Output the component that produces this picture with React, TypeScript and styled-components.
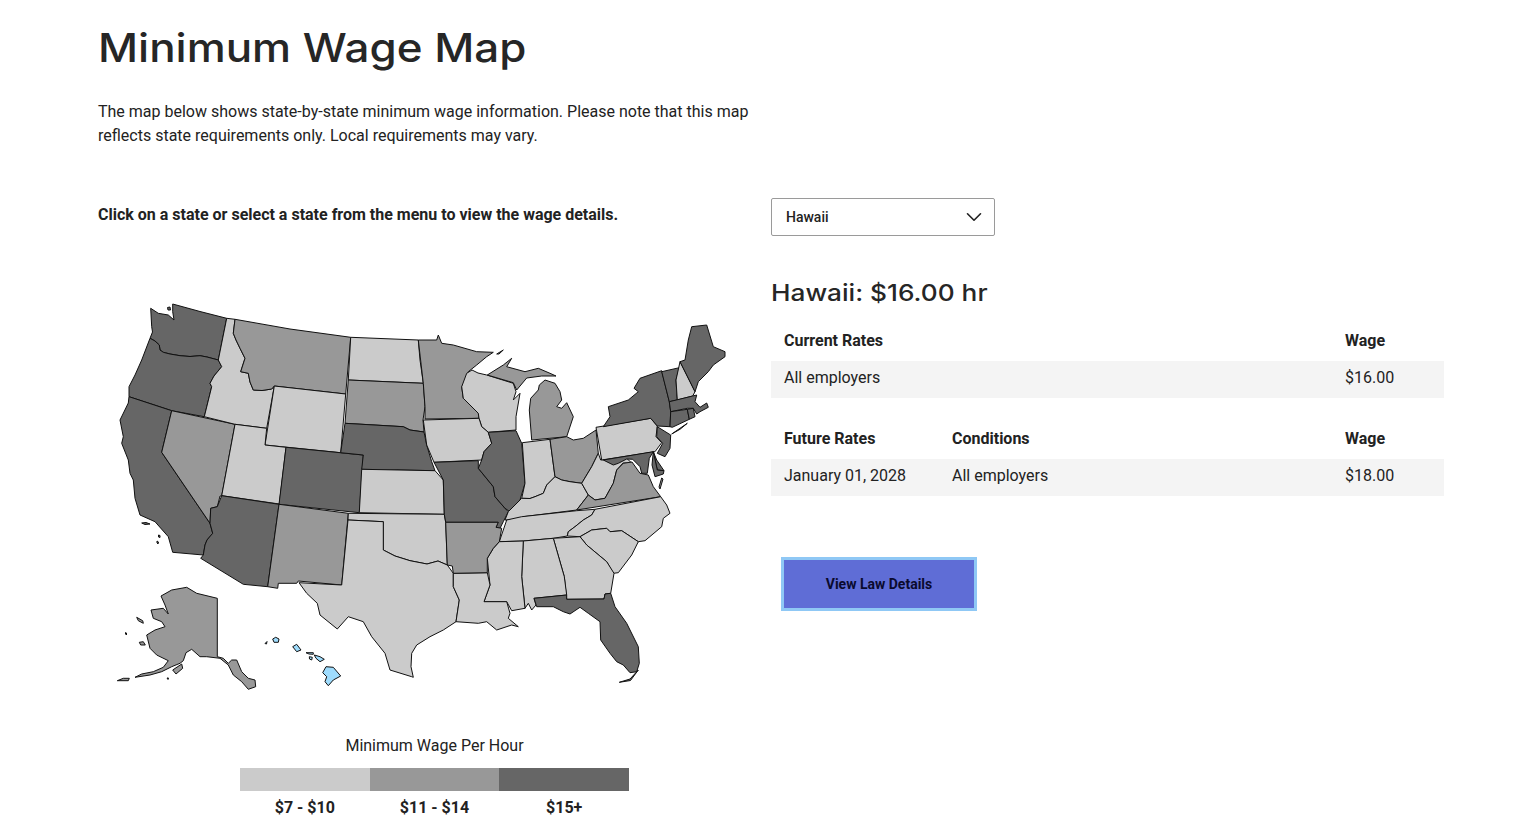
import React from 'react';
import styled, { createGlobalStyle } from 'styled-components';
import { ChevronDown } from 'lucide-react';

const GlobalStyle = createGlobalStyle`
  html, body {
    margin: 0;
    padding: 0;
    background: #fff;
    overflow: hidden;
  }
  body {
    font-family: Roboto, "Liberation Sans", sans-serif;
    color: #222;
  }
`

const Page = styled.div`
  width: 1346px;
  height: 815px;
  margin-left: 98px;
  padding-top: 22px;
  box-sizing: border-box;
`

const Title = styled.h1`
  font-family: Inter, "Liberation Sans", sans-serif;
  font-size: 40px;
  line-height: 52px;
  font-weight: 500;
  margin: 0;
  color: #262626;
  transform: scaleX(1.098);
  transform-origin: left center;
`

const Intro = styled.p`
  width: 665px;
  margin: 26px 0 0;
  font-size: 16px;
  line-height: 24px;
`

const Columns = styled.div`
  display: grid;
  grid-template-columns: 673px 673px;
  margin-top: 50px;
`

const Prompt = styled.div`
  font-size: 16px;
  font-weight: 700;
  line-height: 24px;
  margin-top: 5px;
`

const MapDrawing = styled.svg`
  display: block;
  width: 640px;
  height: 410px;
  margin-top: 63px;
`

const State = styled.polygon<{ $fill: string }>`
  fill: ${(p) => p.$fill};
  stroke: #111;
  stroke-width: 1;
  stroke-linejoin: round;
`

const Legend = styled.div`
  display: flex;
  flex-direction: column;
  align-items: center;
  margin-top: 34px;
`

const LegendTitle = styled.div`
  font-size: 16px;
  line-height: 24px;
`

const LegendBar = styled.div`
  display: grid;
  grid-template-columns: repeat(3, 1fr);
  width: 389px;
  margin-top: 10px;
`

const LegendSwatch = styled.div<{ $fill: string }>`
  height: 23px;
  background: ${(p) => p.$fill};
`

const LegendLabel = styled.div`
  font-size: 16px;
  font-weight: 700;
  line-height: 24px;
  text-align: center;
  margin-top: 5px;
`

const SelectBox = styled.div`
  width: 224px;
  height: 38px;
  box-sizing: border-box;
  display: flex;
  align-items: center;
  justify-content: space-between;
  padding: 0 7px 0 14px;
  border: 1px solid #9a9a9a;
  border-radius: 2px;
  font-size: 14px;
  font-weight: 500;
`

const WageTitle = styled.h2`
  font-family: Inter, "Liberation Sans", sans-serif;
  font-size: 23.5px;
  line-height: 32px;
  font-weight: 500;
  margin: 41px 0 0;
  color: #262626;
  transform: scaleX(1.115);
  transform-origin: left center;
`

const Table = styled.div`
  margin-top: 13px;
  & + & {
    margin-top: 22px;
  }
`

const HeadRow = styled.div`
  display: grid;
  grid-template-columns: 168px 393px 1fr;
  align-items: center;
  height: 39px;
  box-sizing: border-box;
  padding: 0 13px 2px;
  font-size: 16px;
  font-weight: 700;
`

const BodyRow = styled.div`
  display: grid;
  grid-template-columns: 168px 393px 1fr;
  align-items: center;
  height: 37px;
  box-sizing: border-box;
  padding: 0 13px 5px;
  font-size: 16px;
  background: #f4f4f4;
`

const LawButton = styled.button`
  display: block;
  width: 196px;
  height: 54px;
  margin: 61px 0 0 10px;
  border: 3px solid #8fc8f5;
  background: #5f6dd6;
  color: #0a0a2e;
  font-family: Roboto, "Liberation Sans", sans-serif;
  font-size: 14px;
  font-weight: 700;
`

const LIGHT = '#cbcbcb';
const MID = '#989898';
const DARK = '#666666';
const HAWAII = '#9fdcfd';

// traced from the reference, coordinates are page pixels
const STATES: { id: string; fill: string; points: string }[] = [
  { id: 'WA', fill: DARK, points: '172.7,304 200,311.5 226.7,318.3 218.3,360 207,357 200,355.7 190,356.5 180,355.7 170,354 163.3,352.3 160,350 159.3,345 155,341 150,338.3 152.5,332 151.7,326.7 150.7,308.3 158.3,313.3 168.3,315 174,320 172.7,311.7' },
  { id: 'WA2', fill: DARK, points: '167.5,307.5 170,307 170.5,310 168,310' },
  { id: 'OR', fill: DARK, points: '150,338.3 155,341 159.3,345 160,350 163.3,352.3 170,354 180,355.7 190,356.5 200,355.7 207,357 218.3,360 221.7,366.7 214,376 210,383.3 211.7,386.7 204.3,416.7 171.7,410.7 129,396.7 129,386.7 135,375 141.7,360' },
  { id: 'CA', fill: DARK, points: '129,396.7 171.7,410.7 161.7,452.3 210,523.3 212.7,533.3 207,540 205,545 203.3,555 172.7,552.3 168.3,536.7 155,521.7 140,515 135,498.3 133.3,480 130,473.3 128.3,460 121.7,443.3 123.3,436.7 120,420 128.3,403' },
  { id: 'CA2', fill: DARK, points: '141.7,523 146,522.5 150,524 145,524.5' },
  { id: 'CA3', fill: DARK, points: '158.5,535 160,535.5 160,537.5 158.5,537' },
  { id: 'CA4', fill: DARK, points: '157,541 158.5,542 158,544 157,543' },
  { id: 'NV', fill: MID, points: '171.7,410.7 235,424.3 221.7,496 220,496 217.3,506.7 210.7,508.3 210,523.3 161.7,452.3' },
  { id: 'ID', fill: LIGHT, points: '226.7,318.3 235,319.3 233.3,333.3 236,340 240,348.3 245,358.3 240.7,371.7 248.3,373.3 250,382 253.3,390 262,390.5 271.7,389 274.3,386 266.7,428.3 235,424.3 204.3,416.7 211.7,386.7 210,383.3 214,376 221.7,366.7 218.3,360' },
  { id: 'MT', fill: MID, points: '235,319.3 290,329 350.7,337.3 345.7,394 274.3,386 271.7,389 262,390.5 253.3,390 250,382 248.3,373.3 240.7,371.7 245,358.3 240,348.3 236,340 233.3,333.3' },
  { id: 'WY', fill: LIGHT, points: '274.3,386 345.7,394 340.7,452.7 265,445' },
  { id: 'UT', fill: LIGHT, points: '235,424.3 266.7,428.3 265,445 286,447.3 279.3,504 221.7,495.7' },
  { id: 'CO', fill: DARK, points: '286,447.3 363.3,455 359.3,512.7 279,504.3' },
  { id: 'AZ', fill: DARK, points: '221.7,495.7 279,504.3 267.7,586.7 243.3,584.3 200.7,558.3 203.3,555 205,545 207,540 212.7,533.3 210,523.3 210.7,508.3 217.3,506.7' },
  { id: 'NM', fill: MID, points: '279,504.3 348.3,513.3 341.7,585 298.3,581 296.7,583.3 278.3,583.3 277.7,588.3 267.7,586.7' },
  { id: 'ND', fill: LIGHT, points: '350.7,337.3 418.3,340 420,360 423.3,383.3 348.3,380' },
  { id: 'SD', fill: MID, points: '348.3,380 423.3,383.3 425,406.7 423,420 424,432 410,430 403.3,426.7 345,423.3' },
  { id: 'NE', fill: DARK, points: '345,423.3 403.3,426.7 410,430 424,432 426.7,445 431.7,461.7 435,470.7 361.7,469.3 363.3,455 340.7,452.7' },
  { id: 'KS', fill: LIGHT, points: '361.7,469.3 435,470.7 443.3,480 444.3,514.3 359.3,512.7' },
  { id: 'OK', fill: LIGHT, points: '348.3,513.3 444.3,514.3 445.7,522.3 447.3,565 438,561 427,564 410,560.7 395,556 383.3,550 383.3,521.7 348,520' },
  { id: 'TX', fill: LIGHT, points: '348,520 383.3,521.7 383.3,550 395,556 410,560.7 427,564 438,561 447.3,565 453.3,573.3 453.3,586.7 459.3,600 456,621.7 443.3,630 430,636.7 416.7,645 411.7,653.3 411,666.7 413.3,677.3 411.7,676.7 390,670 385,653.3 371.7,636.7 363.3,621.7 348.3,616.7 337.3,629 320,615 317.3,603.3 306.7,593.3 299,582.7 341.7,585' },
  { id: 'MN', fill: MID, points: '418.3,340 436.7,340 438.3,335 441.7,343.3 453.3,345 476.7,351.7 493.3,352.3 486.7,356.7 476.7,365 468.3,371.7 466.7,380 461.7,386.7 463.3,398.3 478.3,413.3 479,418.3 425,419 425,406.7 423.3,383.3' },
  { id: 'MN2', fill: MID, points: '496.7,354 503.3,350 499,354' },
  { id: 'WI', fill: LIGHT, points: '466.7,373.3 472,370 478,373 486.7,375 513.3,383.3 516,391.7 513.3,400 520,393.3 516,416.7 516,430 488.3,432.3 481.7,426.7 479,418.3 478.3,413.3 463.3,398.3 461.7,386.7' },
  { id: 'IA', fill: LIGHT, points: '423.3,420 479,418.3 481.7,426.7 488.3,432.3 491.7,443.3 484,451.7 481.7,460 434,462.3 426.7,445' },
  { id: 'MO', fill: DARK, points: '434,462.3 478.3,460.7 478.3,468.3 493.3,486.7 495,496.7 505,508.3 508.3,511.7 503.3,521.7 500,528.3 496,527.3 498,522.3 445.7,522.3 444.3,514.3 443.3,480' },
  { id: 'IL', fill: DARK, points: '488.3,432.3 516,430.7 521.7,443.3 525,483.3 520,500 510,511.7 505,508.3 495,496.7 493.3,486.7 478.3,468.3 481.7,460 484,451.7 491.7,443.3' },
  { id: 'IN', fill: LIGHT, points: '522.3,442.7 550,439.3 555,476.7 546.7,485 543.3,493.3 535,496.7 530,498.5 521.7,498.3 525,483.3' },
  { id: 'MI', fill: MID, points: '531.7,440 529.3,410 530.7,398.3 538.3,390 539.3,385 545,380 555,383.3 560,391.7 561.7,400 556.7,406.7 561.7,408.3 566.7,402.7 573.3,416.7 566.7,436.7' },
  { id: 'MIU', fill: MID, points: '487.3,375 503.3,365 511.7,358.3 506.7,366.7 525,371.7 538.3,368.3 550,373.3 556,376 541.7,376 526.7,378 516.7,390 513.3,382.7' },
  { id: 'OH', fill: MID, points: '550,439.3 566.7,436.7 573.3,440 583.3,438.3 596,430 598.3,453.3 591.7,466.7 581.7,483.3 570,481.7 561.7,480 555,476.7' },
  { id: 'KY', fill: LIGHT, points: '521.7,498.3 530,498.5 535,496.7 543.3,493.3 546.7,485 555,476.7 561.7,480 570,481.7 581.7,483.3 588.3,495 576.7,510 523.3,516.7 521.7,519 505,520 508.3,511.7 520,500' },
  { id: 'WV', fill: LIGHT, points: '581.7,483.3 591.7,466.7 598.3,453.3 600.7,460 611.7,458.3 613.3,464 626.7,458.3 631.7,463 623,463 616.7,470 613.3,483.3 605,498.3 595,500 588.3,495' },
  { id: 'VA', fill: MID, points: '576.7,510 588.3,495 595,500 605,498.3 613.3,483.3 616.7,470 623.3,463.3 632,462 640,473.3 648.3,475 653.3,486.7 660.7,496.7' },
  { id: 'VA2', fill: MID, points: '661.7,478 663,479 660,489 659,487' },
  { id: 'TN', fill: LIGHT, points: '506.7,520 521.7,516.7 576.7,510.7 595,509.3 591.7,515 583.3,520 575,526.7 568.3,531.7 567.3,536 553.3,538.3 523.3,541 499.3,541.7 505,525' },
  { id: 'NC', fill: LIGHT, points: '595,509.3 660.7,496.7 666.7,505 670,513.3 663.3,518.3 661.7,526.7 645,540.7 638.3,541.7 621.7,530.7 610,531.7 606.7,528.3 591.7,530 580,536.7 567.3,536 568.3,531.7 575,526.7 583.3,520 591.7,515' },
  { id: 'SC', fill: LIGHT, points: '580,536.7 591.7,530 606.7,528.3 610,531.7 621.7,530.7 638.3,541.7 631.7,555 618.3,572.7 613.3,573.3 606.7,561.7 586.7,545' },
  { id: 'GA', fill: LIGHT, points: '553.3,538.3 580,536.7 586.7,545 606.7,561.7 614,573.3 610.7,593.3 605,594 604,599 566.7,599.3 564.3,576.7' },
  { id: 'AL', fill: LIGHT, points: '523.3,541 553.3,538.3 564.3,576.7 566.7,595 534,598.3 536,605 531.7,610 528.3,603.3 525,608.3 521.7,576.7' },
  { id: 'MS', fill: LIGHT, points: '499.3,541.7 523.3,541 521.7,576.7 525,608.3 511.7,610.7 506.7,601.7 484,601.7 490,585 487.3,558.3 493.3,548.3' },
  { id: 'LA', fill: LIGHT, points: '453.3,573.3 487.3,572.7 490,585 484,601.7 506.7,601.7 510,613.3 508.3,618.3 518.3,626.7 511.7,625 496.7,630 486.7,621.7 478.3,623.3 456,621.7 459.3,600 453.3,586.7' },
  { id: 'AR', fill: MID, points: '445.7,522.3 498.3,522.3 496,527.3 501.7,528.3 499.3,541.7 493.3,548.3 487.3,558.3 487.3,572.7 453.3,573.3 452.3,566 447.3,565' },
  { id: 'FL', fill: DARK, points: '534,598.3 566.7,595 566.7,599.3 604,599 605,594 610.7,593.3 615,606.7 626.7,623.3 638.3,646.7 639.3,663.3 636.7,671.7 630,672.7 623.3,665 616.7,661.7 610,653.3 600.7,640 600,621.7 588.3,613.3 580,607.3 570,614 563.3,611.7 553.3,606.7 536.7,606.7' },
  { id: 'FL2', fill: DARK, points: '619.3,682.3 630,679 638.3,670 630.5,680.5' },
  { id: 'PA', fill: LIGHT, points: '596,427.3 650.7,418.3 657.3,426 656,436.7 661.7,442.7 655,451.7 601.7,460' },
  { id: 'NY', fill: DARK, points: '603.3,426.7 610,416.7 608.3,406.7 628.3,400 638.3,391.7 634,388.3 640,378.3 661.7,370.7 669.3,401.7 670.7,411.7 670,426.7 657.3,426 650.7,418.3' },
  { id: 'LI', fill: DARK, points: '671.7,434 687.3,423.3 680,429.3' },
  { id: 'VT', fill: DARK, points: '661.7,371.7 679.3,367.7 676,380 677.3,400 669.3,401.7' },
  { id: 'NH', fill: LIGHT, points: '680,361.7 695,391.7 692.7,396 677.3,400 676,380' },
  { id: 'ME', fill: DARK, points: '680,361.7 685,360 688.3,340 691.7,326.7 706.7,325 713.3,346.7 725,351.7 725,356.7 713.3,365 708.3,371.7 698.3,381.7 695,391.7' },
  { id: 'MA', fill: DARK, points: '669.3,401.7 692.7,396 696.7,395 695,401.7 700,407.3 706.7,403 708.3,407.3 700,411.7 696.7,414 693.3,408.3 687.3,408.3 670.7,411.7' },
  { id: 'CT', fill: DARK, points: '670.7,411.7 687.3,409.3 689.3,419.3 672.3,427.3 670,426.7' },
  { id: 'RI', fill: DARK, points: '687.3,409.3 693.3,408.3 695,416.7 689.3,419.3' },
  { id: 'NJ', fill: DARK, points: '657.3,426.7 670.7,435 670,448.3 665,456.7 657.3,453.3 662.7,443.3 656.7,436.7' },
  { id: 'DE', fill: DARK, points: '653.3,451.7 656.7,460 664,470.7 657.3,470' },
  { id: 'MD', fill: DARK, points: '603.3,460 653.3,451.7 649.3,458.3 647.3,473.3 641.7,473.3 640,466.7 632.7,459.3 626.7,459 618.3,463.3 613.3,465' },
  { id: 'MD2', fill: DARK, points: '653.3,451.7 657.3,470 664,470.7 663.3,474 655,476.7 652,465' },
  { id: 'AK', fill: MID, points: '161,596 171.7,590 186.7,587.3 196.7,593.3 217.3,598.3 217.3,656.7 223.3,658.3 228.3,663.3 231.7,660 236.7,660 241.7,671.7 248.3,678.3 255,680 255.7,686.7 248.3,689.3 241.7,681.7 233.3,675 228.3,665 220,658.3 206.7,656.7 200,656.7 191.7,649.3 186,652.7 183.3,660.7 180,663.3 171.7,666.7 161.7,671.7 150,675 135,677.3 141.7,674 153.3,671.7 163.3,667.3 168.3,660.7 156.7,655 150,648.3 146.7,635 155,630 165,626.7 161.7,621.7 153.3,618.3 151,610 163.3,608.3 168.3,614 165,605' },
  { id: 'AK2', fill: MID, points: '172.7,670 181.7,664 182.7,668.3 176,674' },
  { id: 'AK3', fill: MID, points: '136.7,617.3 142.7,620.7 143.3,623.3 138.3,620.7' },
  { id: 'AK4', fill: MID, points: '139.3,642.3 143.3,641.7 145.3,645 140.7,645' },
  { id: 'AK5', fill: MID, points: '117.3,680.7 123.3,678.3 129.3,678.3 128.3,680.7' },
  { id: 'AK6', fill: MID, points: '125.5,632.5 126.5,633 126.5,635 125.5,634' },
  { id: 'AK7', fill: MID, points: '167,678 168.5,678 168,679.5' },
  { id: 'HI1', fill: HAWAII, points: '326,666.7 333.3,667.3 340.7,676 333.3,680 328.3,685.7 325,681.7 326.7,676.7 322.7,672.7' },
  { id: 'HI2', fill: HAWAII, points: '272.7,639 275.7,637.3 279,639 278.3,642.3 274,642.3' },
  { id: 'HI3', fill: HAWAII, points: '292.7,646.7 296.7,644.3 301,650 296.7,651.7' },
  { id: 'HI4', fill: HAWAII, points: '314.3,655 320,656.7 324.3,659.3 320,661.7 316,658.3' },
  { id: 'HI5', fill: HAWAII, points: '306,652.7 313.3,652.7 313.3,654.3 309,654' },
  { id: 'HI6', fill: HAWAII, points: '309.3,656.7 312.3,657.3 311.7,660 309.5,659' },
  { id: 'HI7', fill: HAWAII, points: '265,643.5 267,641.5 266.5,644' },
];

const App = () => {
  return (
    <Page>
      <GlobalStyle />
      <Title>Minimum Wage Map</Title>
      <Intro>
        The map below shows state-by-state minimum wage information. Please note that this map
        reflects state requirements only. Local requirements may vary.
      </Intro>

      <Columns>
        <div>
          <Prompt>Click on a state or select a state from the menu to view the wage details.</Prompt>
          <MapDrawing viewBox="98 290 640 410" role="img" aria-label="Map of US minimum wage by state">
            {STATES.map((state) => (
              <State key={state.id} $fill={state.fill} points={state.points} />
            ))}
          </MapDrawing>
          <Legend>
            <LegendTitle>Minimum Wage Per Hour</LegendTitle>
            <LegendBar>
              <div>
                <LegendSwatch $fill={LIGHT} />
                <LegendLabel>$7 - $10</LegendLabel>
              </div>
              <div>
                <LegendSwatch $fill={MID} />
                <LegendLabel>$11 - $14</LegendLabel>
              </div>
              <div>
                <LegendSwatch $fill={DARK} />
                <LegendLabel>$15+</LegendLabel>
              </div>
            </LegendBar>
          </Legend>
        </div>

        <div>
          <SelectBox>
            Hawaii
            <ChevronDown size={26} strokeWidth={1.5} color="#222" />
          </SelectBox>
          <WageTitle>Hawaii: $16.00 hr</WageTitle>
          <Table>
            <HeadRow>
              <span>Current Rates</span>
              <span />
              <span>Wage</span>
            </HeadRow>
            <BodyRow>
              <span>All employers</span>
              <span />
              <span>$16.00</span>
            </BodyRow>
          </Table>
          <Table>
            <HeadRow>
              <span>Future Rates</span>
              <span>Conditions</span>
              <span>Wage</span>
            </HeadRow>
            <BodyRow>
              <span>January 01, 2028</span>
              <span>All employers</span>
              <span>$18.00</span>
            </BodyRow>
          </Table>
          <LawButton>View Law Details</LawButton>
        </div>
      </Columns>
    </Page>
  );
};

export default App;
